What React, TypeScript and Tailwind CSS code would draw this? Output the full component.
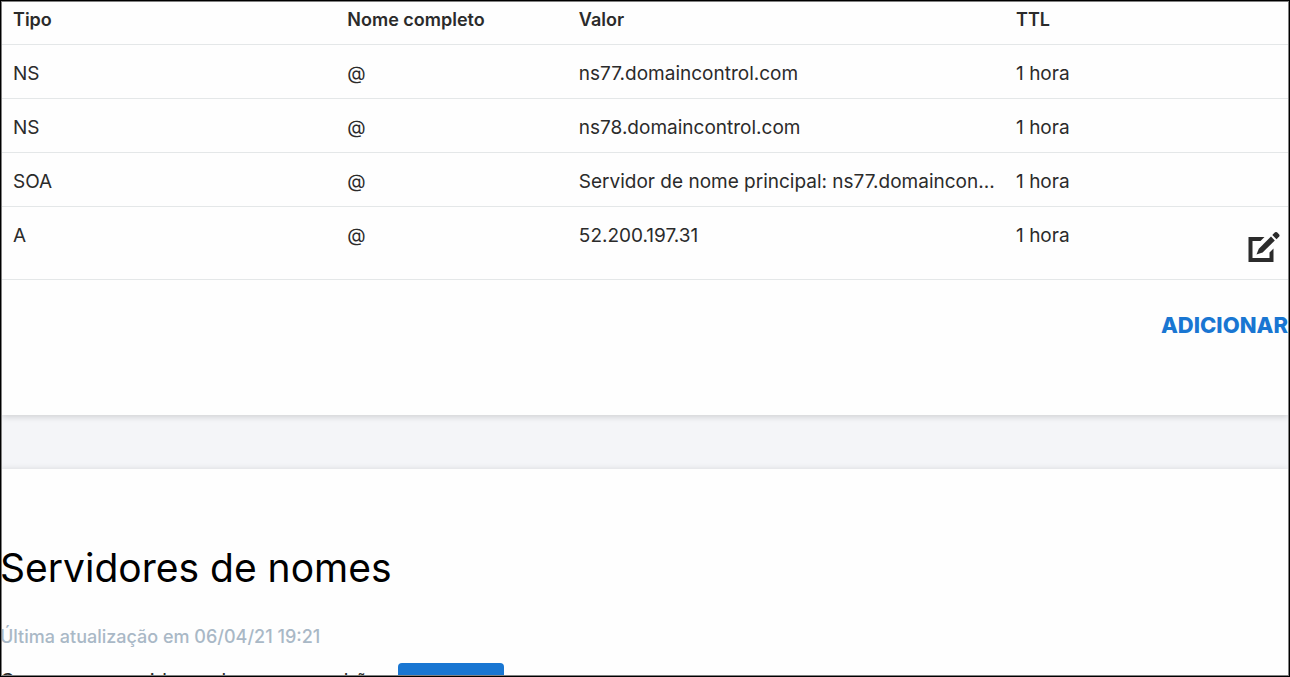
type DnsRecord = {
    type: string;
    name: string;
    value: string;
    ttl: string;
    editable?: boolean;
};

const records: DnsRecord[] = [
    { type: "NS", name: "@", value: "ns77.domaincontrol.com", ttl: "1 hora" },
    { type: "NS", name: "@", value: "ns78.domaincontrol.com", ttl: "1 hora" },
    { type: "SOA", name: "@", value: "Servidor de nome principal: ns77.domaincon...", ttl: "1 hora" },
    { type: "A", name: "@", value: "52.200.197.31", ttl: "1 hora", editable: true },
];

const EditIcon = () => (
    <svg viewBox="0 0 32 32" className="w-8 h-8 overflow-visible" fill="#2b2b2b" aria-hidden="true">
        <path d="M0.500 5H16.500L12.500 9H4.500V26H21.500V20.500L25.500 16.500V30H0.500Z" />
        <path d="M8.500 22.500L10.800 16.800L23 4.600L26.800 8.400L14.600 20.600Z" />
        <path d="M24.300 3L27 0.300Q28 -0.500 29 0.300L31.200 2.500Q32 3.500 31.200 4.500L28.500 7.200Z" />
    </svg>
);

const RecordsTable = () => (
    <table className="w-full table-fixed text-left text-[19px] leading-6 text-[#2b2b2b]">
        <thead>
            <tr className="h-[42px] border-b border-[#e4e7e8] align-top text-[18px]">
                <th className="w-[26%] pl-[11px] pt-1.5 font-semibold">Tipo</th>
                <th className="w-[18%] pl-[11px] pt-1.5 font-semibold">Nome completo</th>
                <th className="w-[34%] pl-[11px] pt-1.5 font-semibold">Valor</th>
                <th className="pl-[11px] pt-1.5 font-semibold">TTL</th>
                <td className="w-16" />
            </tr>
        </thead>
        <tbody>
            {records.map((record, i) => (
                <tr key={i} className="border-b border-[#e4e7e8] align-top">
                    <td className="pl-[11px] pt-[17px] pb-3">{record.type}</td>
                    <td className="pl-[11px] pt-[17px] pb-3">{record.name}</td>
                    <td className="pl-[11px] pt-[17px] pb-3 whitespace-nowrap">{record.value}</td>
                    <td className="pl-[11px] pt-[17px] pb-3">{record.ttl}</td>
                    <td>
                        {record.editable && (
                            <button aria-label="Editar" className="block ml-auto mr-2 mt-[25px] mb-[15px]">
                                <EditIcon />
                            </button>
                        )}
                    </td>
                </tr>
            ))}
        </tbody>
    </table>
);

export default function App() {
    return (
        <div className="h-screen border border-black font-[Inter,sans-serif]">
            <div className="h-full overflow-hidden border border-[#808080] bg-[#f4f5f8]">
                {/* DNS records */}
                <section className="bg-[#fefefe] pb-[76px] shadow-[0_2px_6px_rgba(0,0,0,0.15)]">
                    <RecordsTable />
                    <div className="flex justify-end pt-[31px]">
                        <button className="text-[22px] leading-7 font-extrabold text-[#1976d2]">ADICIONAR</button>
                    </div>
                </section>

                {/* Nameservers */}
                <section className="mt-[54px] -ml-0.5 bg-[#fefefe] pt-[74px] pb-8 shadow-[0_0_6px_rgba(0,0,0,0.12)]">
                    <h2 className="text-[39px] leading-[50px] text-black">Servidores de nomes</h2>
                    <p className="mt-8 text-[18px] leading-6 font-medium text-[#a9b8c6]">
                        Última atualização em 06/04/21 19:21
                    </p>
                    <div className="mt-[14px] flex items-start text-[20px] leading-7 text-[#2b2b2b]">
                        <p className="w-[398px] pt-1">Como usar servidores de nomes padrão</p>
                        <button className="h-10 w-[106px] rounded-[4px] bg-[#1976d2] text-[18px] font-medium text-white">
                            Alterar
                        </button>
                    </div>
                </section>
            </div>
        </div>
    );
}
